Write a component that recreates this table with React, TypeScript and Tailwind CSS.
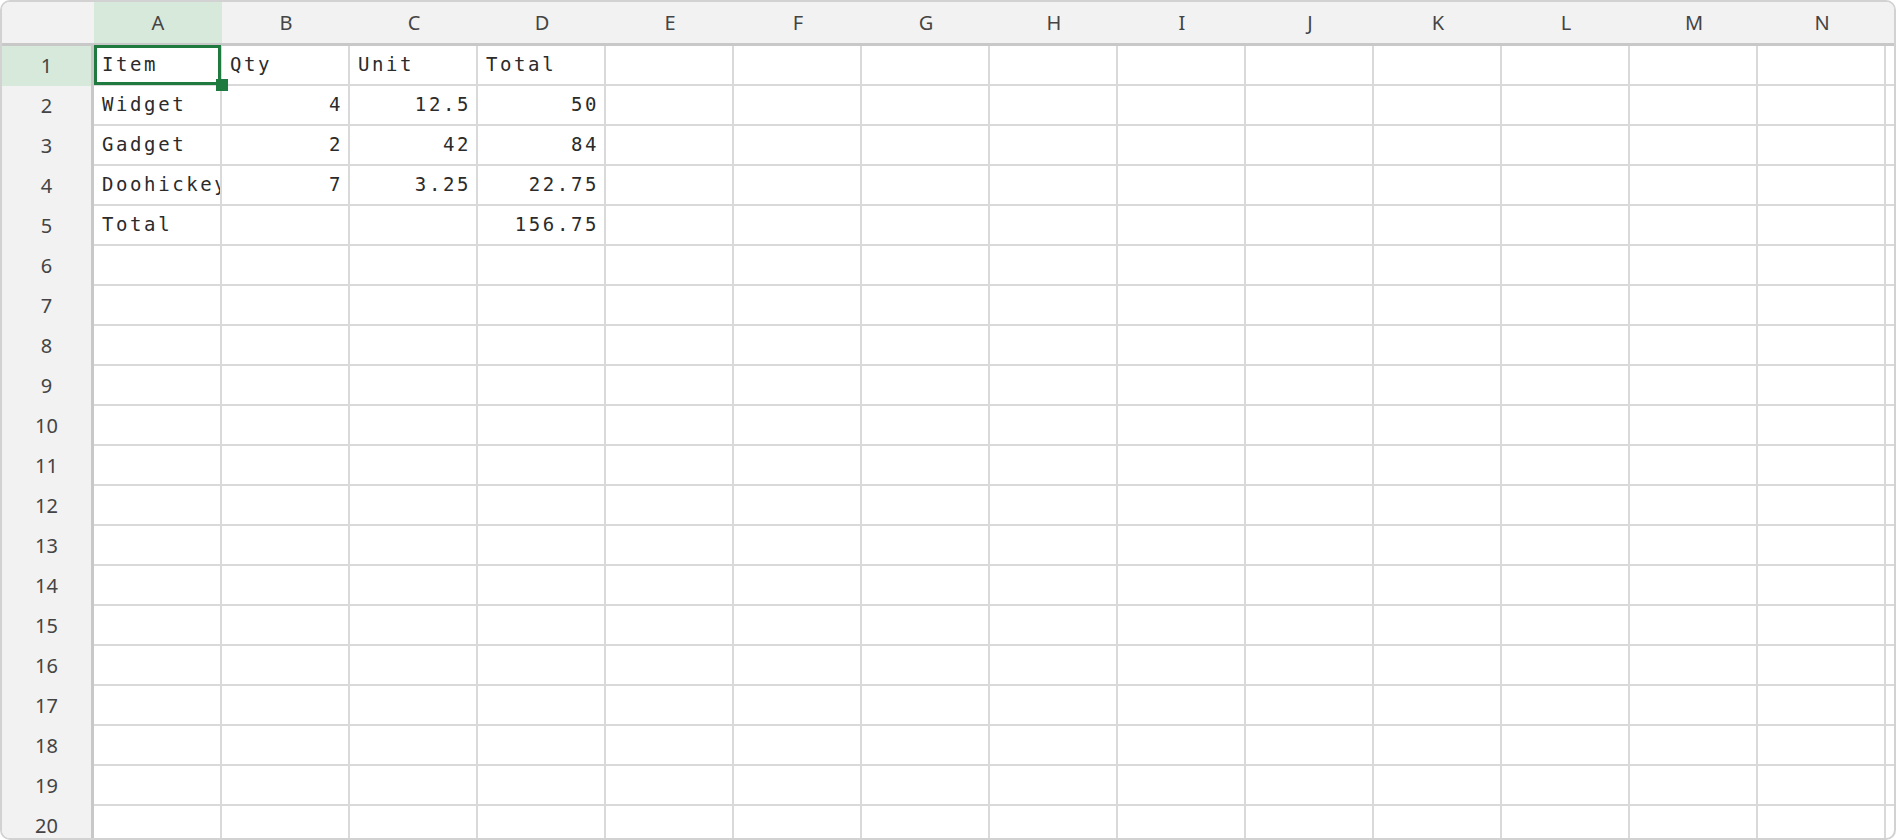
import React from 'react'

const columns = ['A', 'B', 'C', 'D', 'E', 'F', 'G', 'H', 'I', 'J', 'K', 'L', 'M', 'N', '']

type Cell = { v: string; num?: boolean }

const data: Record<number, Cell[]> = {
  1: [{ v: 'Item' }, { v: 'Qty' }, { v: 'Unit' }, { v: 'Total' }],
  2: [{ v: 'Widget' }, { v: '4', num: true }, { v: '12.5', num: true }, { v: '50', num: true }],
  3: [{ v: 'Gadget' }, { v: '2', num: true }, { v: '42', num: true }, { v: '84', num: true }],
  4: [{ v: 'Doohickey' }, { v: '7', num: true }, { v: '3.25', num: true }, { v: '22.75', num: true }],
  5: [{ v: 'Total' }, { v: '' }, { v: '' }, { v: '156.75', num: true }],
}

const rows = Array.from({ length: 20 }, (_, i) => i + 1)

export default function App() {
  return (
    <div className="relative w-[1896px] h-[840px] bg-white overflow-hidden">
      <div className="h-full border-2 border-[#d2d2d2] rounded-[10px] overflow-hidden flex flex-col">
        {/* column headers */}
        <div className="flex shrink-0 h-[44px] bg-[#f2f2f2] border-b-[3px] border-[#c8c8c8] font-['Noto_Sans',sans-serif] text-[20px] text-[#444]">
          <div className="w-[92px] shrink-0" />
          {columns.map((col, i) => (
            <div
              key={i}
              className={`w-[128px] shrink-0 flex items-center justify-center ${
                col === 'A' ? 'bg-[#d6e9da]' : ''
              }`}
            >
              {col}
            </div>
          ))}
        </div>

        {/* rows */}
        <div className="flex flex-col">
          {rows.map(r => (
            <div key={r} className="flex shrink-0 h-[40px]">
              <div
                className={`w-[92px] shrink-0 flex items-center justify-center border-r-[3px] border-[#c8c8c8] font-['Noto_Sans',sans-serif] text-[20px] text-[#444] ${
                  r === 1 ? 'bg-[#d6e9da]' : 'bg-[#f2f2f2]'
                }`}
              >
                {r}
              </div>
              {columns.map((col, ci) => {
                const cell = data[r]?.[ci]
                return (
                  <div
                    key={ci}
                    className={`w-[128px] shrink-0 flex items-center pb-px overflow-hidden border-r-2 border-b-2 border-[#d9d9d9] font-['DejaVu_Sans_Mono',monospace] text-[19px] tracking-[2.6px] text-[#2b2b2b] whitespace-nowrap ${
                      cell?.num ? 'justify-end pr-[5px]' : 'pl-2'
                    }`}
                  >
                    {cell?.v}
                  </div>
                )
              })}
            </div>
          ))}
        </div>
      </div>
      {/* selection box for A1 */}
      <div className="absolute top-[45px] left-[94px] w-[127px] h-[40px] border-[3px] border-[#1e7a3e] pointer-events-none" />
      <div className="absolute top-[79px] left-[216px] w-[12px] h-[12px] bg-[#1e7a3e]" />
    </div>
  )
}
